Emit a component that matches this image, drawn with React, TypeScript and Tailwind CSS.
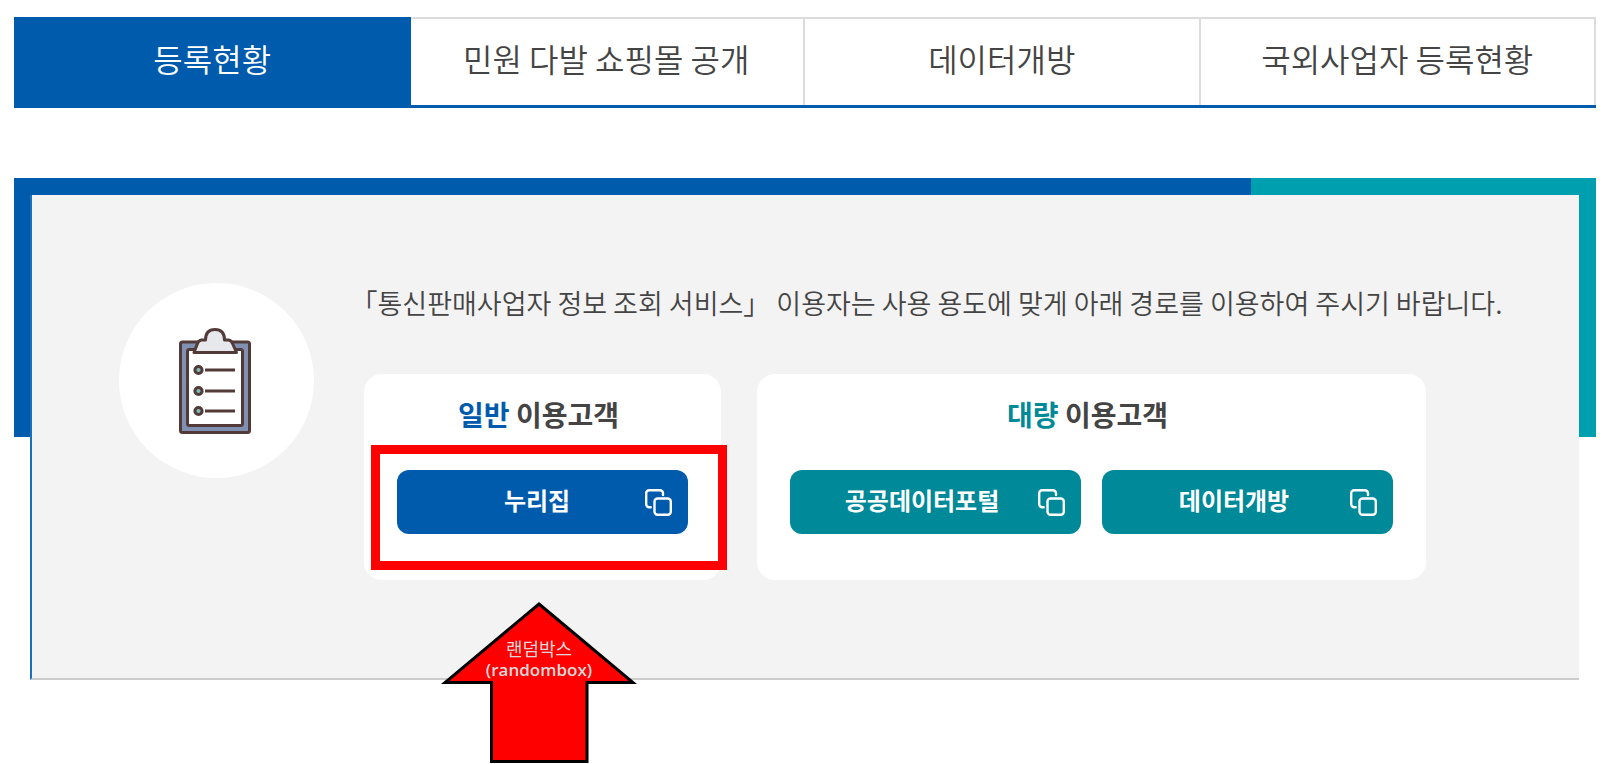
import React from "react";
import clsx from "clsx";

interface LinkItem {
  label: string;
  href: string;
}

interface ServiceCardProps {
  accent: string;
  title: string;
  accentClass: string;
  buttonClass: string;
  links: LinkItem[];
  children?: React.ReactNode;
}

const tabs: LinkItem[] = [
  { label: "등록현황", href: "#status" },
  { label: "민원 다발 쇼핑몰 공개", href: "#complaints" },
  { label: "데이터개방", href: "#open-data" },
  { label: "국외사업자 등록현황", href: "#overseas" },
];

function CopyIcon() {
  return (
    <svg
      viewBox="0 0 27 27"
      className="h-[27px] w-[27px] shrink-0"
      fill="none"
      stroke="currentColor"
      strokeWidth="2.4"
      strokeLinecap="round"
      aria-hidden="true"
    >
      <path d="M18 6V4.2a3 3 0 0 0-3-3H4.2a3 3 0 0 0-3 3v11a3 3 0 0 0 3 3h1.5" />
      <rect x="9.5" y="9.5" width="16.3" height="16.3" rx="3" />
    </svg>
  );
}

function ClipboardIcon() {
  return (
    <svg
      viewBox="0 0 72 106"
      className="h-[106px] w-[72px]"
      stroke="#523a38"
      strokeWidth="3"
      strokeLinejoin="round"
      aria-hidden="true"
    >
      <rect x="1.5" y="14" width="69" height="90.5" rx="2" fill="#7f90b3" />
      <rect x="8.5" y="21.5" width="55" height="76" rx="2" fill="#fff" />
      <path
        d="M15 24.5l3.5-9q1-3 4-3.5h4q0-10.5 9.5-10.5t9.5 10.5h4q3 .5 4 3.5l4 9z"
        fill="#e6e8ec"
      />
      {[42, 63, 83].map((y) => (
        <g key={y}>
          <circle cx="19.5" cy={y} r="3.6" fill="#80bcbb" />
          <path d={`M26 ${y}h30`} />
        </g>
      ))}
    </svg>
  );
}

function ServiceCard({
  accent,
  title,
  accentClass,
  buttonClass,
  links,
  children,
}: ServiceCardProps) {
  return (
    <section className="relative rounded-[18px] bg-white px-[33px] pt-5 pb-[46px]">
      <h2 className="pr-2 text-center text-[28px] leading-10 font-bold text-[#444]">
        <span className={accentClass}>{accent}</span> {title}
      </h2>
      <div className="mt-9 flex gap-[21px]">
        {links.map((link) => (
          <a
            key={link.label}
            href={link.href}
            className={clsx(
              "flex h-16 w-[291px] items-center rounded-xl pr-4 text-2xl font-bold text-white",
              buttonClass
            )}
          >
            <span className="flex-1 pb-1 text-center">{link.label}</span>
            <CopyIcon />
          </a>
        ))}
      </div>
      {children}
    </section>
  );
}

// Red frame and arrow that point at the first button
function Callout() {
  return (
    <>
      <div className="pointer-events-none absolute top-[71px] left-[7px] h-[125px] w-[356px] border-[9px] border-[#f00]" />
      <div className="absolute top-[228px] left-[77px] h-[161px] w-[196px]">
        <svg viewBox="0 0 196 161" className="h-full w-full" aria-hidden="true">
          <path
            d="M98 2L192 80.5H146V159.5H50.5V80.5H4z"
            fill="#f00"
            stroke="#000"
            strokeWidth="3"
          />
        </svg>
        <p className="absolute inset-x-0 top-9 text-center text-[18px] leading-5 text-[#d9d9d9]">
          랜덤박스
          <br />
          <span className="font-['Open_Sans',sans-serif] text-[17px] font-semibold">
            (randombox)
          </span>
        </p>
      </div>
    </>
  );
}

export default function App() {
  return (
    <main className="min-h-screen bg-white pt-[17px] pr-[22px] pl-[14px] font-['Noto_Sans_CJK_KR',sans-serif]">
      <nav className="grid grid-cols-4 border-b-3 border-[#005bac]">
        {tabs.map((tab, i) => (
          <a
            key={tab.label}
            href={tab.href}
            aria-current={i === 0 ? "page" : undefined}
            className={clsx(
              "flex h-[88px] items-center justify-center border-t-2 pb-2 text-[32px] font-[350]",
              i === 0
                ? "relative -mr-px border-[#005bac] bg-[#005bac] text-white"
                : "border-r-2 border-[#dcdcdc] text-[#444]"
            )}
          >
            {tab.label}
          </a>
        ))}
      </nav>

      {/* The two-tone band only covers the top part of the panel's sides */}
      <div className="mt-[70px] bg-[linear-gradient(to_right,#005bac_78.2%,#009fb0_78.2%)] bg-[length:100%_259px] bg-no-repeat pt-[17px] pr-[17px] pl-4">
        <div className="flex gap-[50px] border-b-2 border-l-2 border-b-[#ccc] border-l-[#1a70ba] bg-[#f3f3f3] pt-[88px] pb-[98px] pl-[87px]">
          <div className="flex h-[195px] w-[195px] shrink-0 items-center justify-center rounded-full bg-white pr-1">
            <ClipboardIcon />
          </div>
          <div>
            <p className="text-[27px] leading-10 font-[350] whitespace-nowrap text-[#444] [text-spacing-trim:trim-start]">
              「통신판매사업자 정보 조회 서비스」 이용자는 사용 용도에 맞게 아래
              경로를 이용하여 주시기 바랍니다.
            </p>
            <div className="mt-[51px] flex gap-9">
              <ServiceCard
                accent="일반"
                title="이용고객"
                accentClass="text-[#005bac]"
                buttonClass="bg-[#005bac] pl-8"
                links={[{ label: "누리집", href: "#home" }]}
              >
                <Callout />
              </ServiceCard>
              <ServiceCard
                accent="대량"
                title="이용고객"
                accentClass="text-[#008998]"
                buttonClass="bg-[#008998] pl-4"
                links={[
                  { label: "공공데이터포털", href: "#portal" },
                  { label: "데이터개방", href: "#data" },
                ]}
              />
            </div>
          </div>
        </div>
      </div>
    </main>
  );
}
